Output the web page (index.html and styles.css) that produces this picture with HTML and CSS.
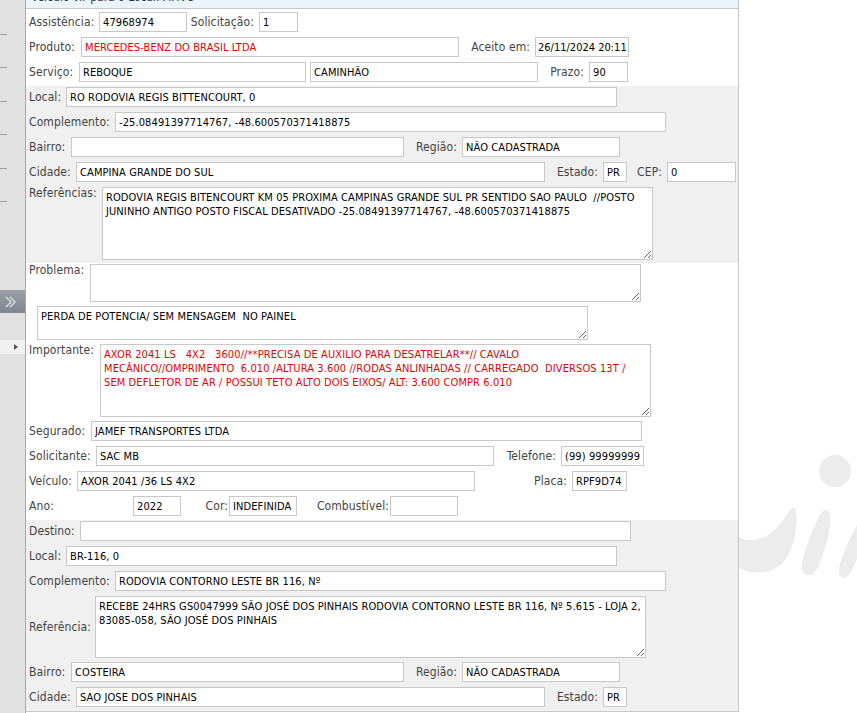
FILE: index.html
```html
<!DOCTYPE html>
<html lang="pt-BR">
<head>
    <meta charset="UTF-8">
    <title>Atendimento</title>
    <link rel="stylesheet" href="styles.css">
</head>
<body>
    <div class="sidebar">
        <div class="ticks">
            <span></span><span></span><span></span><span></span><span></span><span></span>
        </div>
        <div class="expand">
            <svg width="24" height="23" viewBox="0 0 24 23">
                <polyline points="6,7 11,12 6,17" fill="none" stroke="#d9dde1" stroke-width="1.4"/>
                <polyline points="10,7 15,12 10,17" fill="none" stroke="#d9dde1" stroke-width="1.4"/>
            </svg>
        </div>
        <div class="arrow-row"><span class="tri"></span></div>
    </div>

    <div class="panel">
        <div class="topbar"><span class="tb-text">Veículo vir para o Local: ATIVO</span></div>

        <div class="sec first">
            <div class="row">
                <label class="lb w70">Assistência:</label>
                <input class="fld w88" value="47968974">
                <label class="lb rt w72">Solicitação:</label>
                <input class="fld w39" value="1">
            </div>
            <div class="row">
                <label class="lb w52">Produto:</label>
                <input class="fld w378 red" value="MERCEDES-BENZ DO BRASIL LTDA">
                <label class="lb rt w76">Aceito em:</label>
                <input class="fld w94 tight" value="26/11/2024 20:11">
            </div>
            <div class="row">
                <label class="lb w50">Serviço:</label>
                <input class="fld w227" value="REBOQUE">
                <input class="fld w228 ml4" value="CAMINHÃO">
                <label class="lb rt w51">Prazo:</label>
                <input class="fld w39" value="90">
            </div>
        </div>

        <div class="sec gray">
            <div class="row">
                <label class="lb w37">Local:</label>
                <input class="fld w551" value="RO RODOVIA REGIS BITTENCOURT, 0">
            </div>
            <div class="row">
                <label class="lb w86">Complemento:</label>
                <input class="fld w551" value="-25.08491397714767, -48.600570371418875">
            </div>
            <div class="row">
                <label class="lb w42">Bairro:</label>
                <input class="fld w333" value="">
                <label class="lb rt w58">Região:</label>
                <input class="fld w158" value="NÃO CADASTRADA">
            </div>
            <div class="row">
                <label class="lb w47">Cidade:</label>
                <input class="fld w469" value="CAMPINA GRANDE DO SUL">
                <label class="lb rt w58">Estado:</label>
                <input class="fld w24" value="PR">
                <label class="lb rt w40">CEP:</label>
                <input class="fld w69" value="0">
            </div>
            <div class="row top">
                <label class="lb w73">Referências:</label>
                <textarea class="fld w551 h72">RODOVIA REGIS BITENCOURT KM 05 PROXIMA CAMPINAS GRANDE SUL PR SENTIDO SAO PAULO  //POSTO JUNINHO ANTIGO POSTO FISCAL DESATIVADO -25.08491397714767, -48.600570371418875</textarea>
            </div>
        </div>

        <div class="sec">
            <div class="row top">
                <label class="lb w61">Problema:</label>
                <textarea class="fld w551 h37"></textarea>
            </div>
            <div class="row indent">
                <textarea class="fld w551 h33">PERDA DE POTENCIA/ SEM MENSAGEM  NO PAINEL</textarea>
            </div>
            <div class="row top">
                <label class="lb w71">Importante:</label>
                <textarea class="fld w551 h72 red">AXOR 2041 LS   4X2   3600//**PRECISA DE AUXILIO PARA DESATRELAR**// CAVALO
MECÂNICO//OMPRIMENTO  6.010 /ALTURA 3.600 //RODAS ANLINHADAS // CARREGADO  DIVERSOS 13T /
SEM DEFLETOR DE AR / POSSUI TETO ALTO DOIS EIXOS/ ALT: 3.600 COMPR 6.010</textarea>
            </div>
            <div class="row">
                <label class="lb w62">Segurado:</label>
                <input class="fld w551" value="JAMEF TRANSPORTES LTDA">
            </div>
            <div class="row">
                <label class="lb w67">Solicitante:</label>
                <input class="fld w398" value="SAC MB">
                <label class="lb rt w67">Telefone:</label>
                <input class="fld w83" value="(99) 9999999999">
            </div>
            <div class="row">
                <label class="lb w48">Veículo:</label>
                <input class="fld w398" value="AXOR 2041 /36 LS 4X2">
                <label class="lb rt w97">Placa:</label>
                <input class="fld w55" value="RPF9D74">
            </div>
            <div class="row">
                <label class="lb w104">Ano:</label>
                <input class="fld w48" value="2022">
                <label class="lb rt snug w48">Cor:</label>
                <input class="fld w68" value="INDEFINIDA">
                <label class="lb rt snug w93">Combustível:</label>
                <input class="fld w68" value="">
            </div>
        </div>

        <div class="sec gray">
            <div class="row">
                <label class="lb w51">Destino:</label>
                <input class="fld w551" value="">
            </div>
            <div class="row">
                <label class="lb w37">Local:</label>
                <input class="fld w551" value="BR-116, 0">
            </div>
            <div class="row">
                <label class="lb w86">Complemento:</label>
                <input class="fld w551" value="RODOVIA CONTORNO LESTE BR 116, Nº">
            </div>
            <div class="row">
                <label class="lb w66">Referência:</label>
                <textarea class="fld w551 h61">RECEBE 24HRS GS0047999 SÃO JOSÉ DOS PINHAIS RODOVIA CONTORNO LESTE BR 116, Nº 5.615 - LOJA 2, 83085-058, SÃO JOSÉ DOS PINHAIS</textarea>
            </div>
            <div class="row">
                <label class="lb w42">Bairro:</label>
                <input class="fld w333" value="COSTEIRA">
                <label class="lb rt w58">Região:</label>
                <input class="fld w158" value="NÃO CADASTRADA">
            </div>
            <div class="row">
                <label class="lb w47">Cidade:</label>
                <input class="fld w469" value="SAO JOSE DOS PINHAIS">
                <label class="lb rt w58">Estado:</label>
                <input class="fld w24" value="PR">
            </div>
        </div>
    </div>

    <div class="aside">
        <svg class="mark" width="118" height="160" viewBox="0 0 118 160">
            <circle cx="96" cy="31" r="16" fill="#ececec"/>
            <path d="M0,97 C12,104 30,100 44,80 C49,73 52,68 55,67 C60,72 58,100 48,117 C38,134 15,136 0,128 Z" fill="#ececec"/>
            <path d="M88,70 C95,72 90,100 82,120 C78,132 72,138 66,134 C60,130 64,115 70,100 C76,85 82,68 88,70 Z" fill="#ececec"/>
            <path d="M125,80 C130,85 122,110 114,128 C110,137 104,140 101,136 C98,131 102,118 108,105 C114,92 120,78 125,80 Z" fill="#ececec"/>
        </svg>
    </div>
</body>
</html>
```

FILE: styles.css
```css
* {
    box-sizing: border-box;
}

body {
    margin: 0;
    height: 713px;
    overflow: hidden;
    display: flex;
    background-color: #fff;
    font-family: "DejaVu Sans Condensed", "DejaVu Sans", sans-serif;
}

/* left collapsed menu */
.sidebar {
    width: 26px;
    flex-shrink: 0;
    background-color: #e1e1e1;
    border-right: 1px solid #a9a9a9;
}

.ticks {
    height: 290px;
    padding-top: 34px;
}

.ticks span {
    display: block;
    width: 7px;
    height: 1px;
    background-color: #a0a0a0;
    margin-bottom: 32.4px;
}

.expand {
    height: 23px;
    width: 25px;
    background: linear-gradient(#9aa0a6, #7f868d);
}

.expand svg {
    display: block;
}

.arrow-row {
    margin-top: 27px;
    height: 14px;
    background-color: #f1f1f1;
    padding-top: 4px;
}

.tri {
    display: block;
    width: 0;
    height: 0;
    margin-left: 14px;
    border-left: 4px solid #555;
    border-top: 3px solid transparent;
    border-bottom: 3px solid transparent;
}

/* main form */
.panel {
    width: 713px;
    flex-shrink: 0;
    align-self: flex-start;
    border-right: 1px solid #c8c8c8;
    border-bottom: 1px solid #c8c8c8;
}

.topbar {
    height: 9px;
    overflow: hidden;
    background-color: #e9f4fc;
    border-bottom: 1px solid #c8c8c8;
}

.tb-text {
    display: block;
    margin-top: -9px;
    padding-left: 5px;
    font-size: 12px;
    line-height: 12px;
    color: #333;
}

.sec.first {
    padding-top: 2px;
}

.sec.gray {
    background-color: #f0f0f0;
}

.row {
    display: flex;
    align-items: center;
    padding-left: 3px;
}

.row.top {
    align-items: flex-start;
}

.row.indent {
    padding-left: 11px;
}

.lb {
    flex-shrink: 0;
    margin-bottom: 3px;
    font-size: 12px;
    line-height: 14px;
    letter-spacing: 0.1px;
    color: #444;
    white-space: nowrap;
}

.row.top .lb {
    margin-bottom: 0;
}

.lb.rt {
    text-align: right;
    padding-right: 5px;
}

.lb.rt.snug {
    padding-right: 1px;
}

.fld {
    flex-shrink: 0;
    height: 20px;
    margin: 1px 0 4px 0;
    padding: 0 3px;
    border: 1px solid #c8c8c8;
    border-radius: 0;
    background-color: #fff;
    color: #000;
    font-family: "DejaVu Sans Condensed", "DejaVu Sans", sans-serif;
    font-size: 11px;
    letter-spacing: 0.1px;
    outline: none;
}

.fld.tight {
    padding: 0 0 0 2px;
    letter-spacing: 0;
}

textarea.fld {
    margin-bottom: 3px;
    padding: 3px;
    line-height: 14px;
    overflow: hidden;
}

.fld.red {
    color: #e60000;
}

.ml4 { margin-left: 4px; }

.h33 { height: 34px; }
.h37 { height: 38px; }
.h61 { height: 62px; }
.h72 { height: 73px; }

.w24 { width: 24px; }
.w37 { width: 37px; }
.w39 { width: 39px; }
.w40 { width: 40px; }
.w42 { width: 42px; }
.w47 { width: 47px; }
.w48 { width: 48px; }
.w50 { width: 50px; }
.w51 { width: 51px; }
.w52 { width: 52px; }
.w55 { width: 55px; }
.w58 { width: 58px; }
.w61 { width: 61px; }
.w62 { width: 62px; }
.w66 { width: 66px; }
.w67 { width: 67px; }
.w68 { width: 68px; }
.w69 { width: 69px; }
.w70 { width: 70px; }
.w71 { width: 71px; }
.w72 { width: 72px; }
.w73 { width: 73px; }
.w76 { width: 76px; }
.w83 { width: 83px; }
.w86 { width: 86px; }
.w88 { width: 88px; }
.w93 { width: 93px; }
.w94 { width: 94px; }
.w97 { width: 97px; }
.w104 { width: 104px; }
.w158 { width: 158px; }
.w227 { width: 227px; }
.w228 { width: 228px; }
.w333 { width: 333px; }
.w378 { width: 378px; }
.w398 { width: 398px; }
.w469 { width: 469px; }
.w551 { width: 551px; }

/* watermark on the right */
.aside {
    flex: 1;
}

.mark {
    display: block;
    margin-top: 440px;
}
```
